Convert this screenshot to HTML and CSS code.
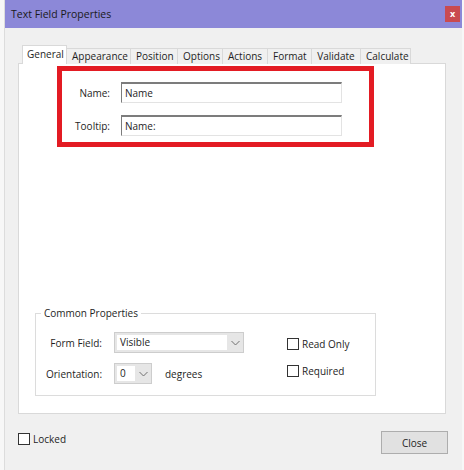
FILE: index.html
```html
<!DOCTYPE html>
<html lang="en">
<head>
    <meta charset="UTF-8">
    <title>Text Field Properties</title>
    <link rel="stylesheet" href="styles.css">
</head>
<body>
  <div class="window">
    <div class="titlebar">
        <span class="title">Text Field Properties</span>
        <button class="close-x">x</button>
    </div>

    <div class="dialog">
        <div class="tabs">
            <div class="tab active">General</div>
            <div class="tab">Appearance</div>
            <div class="tab">Position</div>
            <div class="tab">Options</div>
            <div class="tab">Actions</div>
            <div class="tab">Format</div>
            <div class="tab">Validate</div>
            <div class="tab">Calculate</div>
        </div>

        <div class="panel">
            <div class="highlight">
                <div class="field-grid">
                    <label>Name:</label>
                    <div class="text-input">Name</div>
                    <label>Tooltip:</label>
                    <div class="text-input">Name:</div>
                </div>
            </div>

            <fieldset class="group">
                <legend>Common Properties</legend>
                <div class="group-body">
                    <div class="prop-grid">
                        <label>Form Field:</label>
                        <div class="combo combo-wide">
                            <span class="combo-value">Visible</span>
                            <span class="combo-arrow">
                                <svg width="9" height="6" viewBox="0 0 9 6"><path d="M0.5 1 L4.5 5 L8.5 1" fill="none" stroke="#707070" stroke-width="1"/></svg>
                            </span>
                        </div>
                        <label>Orientation:</label>
                        <div class="combo-row">
                            <div class="combo combo-small">
                                <span class="combo-value">0</span>
                                <span class="combo-arrow">
                                    <svg width="9" height="6" viewBox="0 0 9 6"><path d="M0.5 1 L4.5 5 L8.5 1" fill="none" stroke="#707070" stroke-width="1"/></svg>
                                </span>
                            </div>
                            <span>degrees</span>
                        </div>
                    </div>
                    <div class="checks">
                        <label class="check"><span class="box"></span>Read Only</label>
                        <label class="check"><span class="box"></span>Required</label>
                    </div>
                </div>
            </fieldset>
        </div>

        <div class="footer">
            <label class="check"><span class="box"></span>Locked</label>
            <button class="btn-close">Close</button>
        </div>
    </div>
  </div>
</body>
</html>
```

FILE: styles.css
```css
* {
    margin: 0;
    padding: 0;
    box-sizing: border-box;
}

body {
    width: 464px;
    height: 470px;
    background: #f7f7f7;
    font-family: "Open Sans", "Noto Sans", sans-serif;
    font-size: 10px;
    color: #1e1e1e;
    overflow: hidden;
}

.window {
    margin-left: 4px;
    width: 458px;
    height: 470px;
    background: #f0f0f0;
    border-left: 1px solid #dcdcdc;
}

.titlebar {
    height: 28px;
    background: #8c88d8;
    display: flex;
    align-items: center;
    padding-left: 6px;
}

.title {
    flex: 1;
    font-size: 10.5px;
    color: #1a1a1a;
}

.close-x {
    width: 15px;
    height: 16px;
    margin-right: 2px;
    border: none;
    background: #c94a50;
    color: white;
    font-family: "Open Sans", sans-serif;
    font-size: 9px;
    font-weight: bold;
    line-height: 14px;
}

.dialog {
    padding: 17px 16px 0 13px;
}

.tabs {
    display: flex;
    align-items: flex-end;
    height: 19px;
    padding-left: 4px;
    margin-bottom: -1px;
    position: relative;
    z-index: 1;
}

.tab {
    height: 16px;
    padding: 0 5px;
    line-height: 14px;
    border: 1px solid #d9d9d9;
    border-left: none;
    border-bottom: none;
    background: #f0f0f0;
    text-align: center;
}

.tab.active {
    height: 19px;
    line-height: 16px;
    background: white;
    border-left: 1px solid #d9d9d9;
    padding: 0 4px;
}

.tab:nth-child(1) { width: 45px; }
.tab:nth-child(2) { width: 64px; }
.tab:nth-child(3) { width: 47px; }
.tab:nth-child(4) { width: 45px; }
.tab:nth-child(5) { width: 45px; }
.tab:nth-child(6) { width: 44px; }
.tab:nth-child(7) { width: 49px; }
.tab:nth-child(8) { width: 50px; }

.panel {
    height: 351px;
    background: white;
    border: 1px solid #d9d9d9;
    display: flex;
    flex-direction: column;
}

.highlight {
    width: 317px;
    height: 81px;
    margin: 2px 0 0 38px;
    border: 5px solid #e31b23;
    padding-top: 11px;
}

.field-grid {
    display: grid;
    grid-template-columns: 48px 221px;
    column-gap: 11px;
    row-gap: 12px;
    align-items: center;
}

.field-grid label {
    text-align: right;
}

.text-input {
    height: 21px;
    padding: 0 3px;
    line-height: 18px;
    background: white;
    border: 1px solid #e3e3e3;
    border-top: 2px solid #7c7c7c;
    border-left: 1px solid #7c7c7c;
}

.group {
    margin: auto 0 17px 16px;
    width: 341px;
    border: 1px solid #dcdcdc;
    padding: 12px 0 11px 10px;
}

.group legend {
    margin-left: -5px;
    padding: 0 3px;
}

.group-body {
    display: flex;
}

.prop-grid {
    display: grid;
    grid-template-columns: 56px auto;
    column-gap: 12px;
    row-gap: 10px;
    align-items: center;
}

.prop-grid label {
    text-align: right;
}

.combo {
    height: 21px;
    display: flex;
    background: #e6e6e6;
    border: 1px solid #cdcdcd;
    padding: 2px 0 2px 2px;
}

.combo-wide {
    width: 130px;
}

.combo-small {
    width: 38px;
}

.combo-value {
    flex: 1;
    background: white;
    padding-left: 3px;
    line-height: 15px;
}

.combo-arrow {
    width: 16px;
    display: flex;
    align-items: center;
    justify-content: center;
}

.combo-row {
    display: flex;
    align-items: center;
    gap: 13px;
}

.checks {
    margin: 4px 0 0 43px;
    display: flex;
    flex-direction: column;
    gap: 11px;
}

.check {
    display: flex;
    align-items: center;
    gap: 3px;
    height: 16px;
}

.box {
    width: 12px;
    height: 12px;
    border: 1px solid #333;
    background: white;
}

.footer {
    display: flex;
    justify-content: space-between;
    align-items: flex-start;
    margin: 17px -2px 0 0;
}

.btn-close {
    width: 67px;
    height: 23px;
    background: #e1e1e1;
    border: 1px solid #adadad;
    font-family: "Open Sans", sans-serif;
    font-size: 10px;
    color: #1e1e1e;
}
```
